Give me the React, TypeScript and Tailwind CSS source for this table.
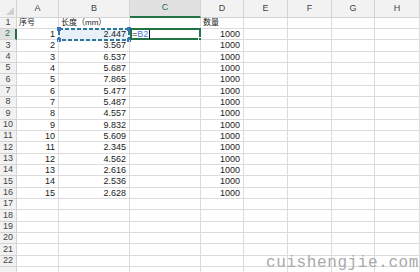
import React from "react";

const columns = [
  { key: "A", width: "w-[42px]" },
  { key: "B", width: "w-[71px]" },
  { key: "C", width: "w-[71px]" },
  { key: "D", width: "w-[43px]" },
  { key: "E", width: "w-[44px]" },
  { key: "F", width: "w-[44px]" },
  { key: "G", width: "w-[43px]" },
  { key: "H", width: "w-[45px]" },
];

const lengths = [
  "2.447", "3.567", "6.537", "5.687", "7.865", "5.477", "5.487", "4.557",
  "9.832", "5.609", "2.345", "4.562", "2.616", "2.536", "2.628",
];

const ROW_COUNT = 23;

const cellText = (row: number, col: string): React.ReactNode => {
  if (row === 1) {
    if (col === "A") return "序号";
    if (col === "B") return "长度（mm）";
    if (col === "D") return "数量";
    return null;
  }
  if (row >= 2 && row <= 16) {
    if (col === "A") return String(row - 1);
    if (col === "B") return lengths[row - 2];
    if (col === "D") return "1000";
  }
  return null;
};

const Corner = () => (
  <div className="w-[17px] h-full shrink-0 bg-[#f2f2f2] border-r border-b border-[#d4d4d4] flex items-end justify-end p-[2px]">
    <svg width="8" height="8" viewBox="0 0 8 8">
      <polygon points="8,0 8,8 0,8" fill="#cfcfcf" />
    </svg>
  </div>
);

const HeaderRow = () => (
  <div className="flex h-[18px] shrink-0">
    <Corner />
    {columns.map((c) => {
      const selected = c.key === "C";
      return (
        <div
          key={c.key}
          className={`${c.width} shrink-0 h-full border-r border-[#d4d4d4] flex items-center justify-center text-[9px] ${
            selected
              ? "bg-[#e1e1e1] border-b-2 border-b-[#217346] text-[#217346]"
              : "bg-[#f2f2f2] border-b text-[#444]"
          }`}
        >
          <span>{c.key}</span>
        </div>
      );
    })}
  </div>
);

// copy-range "marching ants" around B2
const CopyMarquee = () => (
  <div className="absolute top-[-1px] left-[-1px] w-[72px] h-[13px] bg-[#e8f0fa]">
    <svg className="absolute left-0 top-0" width="72" height="13" viewBox="0 0 72 13">
      <rect x="1" y="1" width="70" height="11" fill="none" stroke="#2f7896" strokeWidth="2" strokeDasharray="4 2" />
    </svg>
    <span className="absolute top-[-1px] left-[-1px] w-[4px] h-[4px] bg-[#3a6fc4]" />
    <span className="absolute top-[-1px] right-[-1px] w-[4px] h-[4px] bg-[#3a6fc4]" />
    <span className="absolute bottom-[-1px] left-[-1px] w-[4px] h-[4px] bg-[#3a6fc4]" />
    <span className="absolute bottom-[-1px] right-[-1px] w-[4px] h-[4px] bg-[#3a6fc4]" />
  </div>
);

const Cell = ({ row, col, width }: { row: number; col: string; width: string }) => {
  const value = cellText(row, col);
  const isText = row === 1;
  const isB2 = row === 2 && col === "B";
  const isC2 = row === 2 && col === "C";

  return (
    <div
      className={`${width} shrink-0 h-full relative border-r border-b border-[#dcdcdc] flex items-center ${
        isText ? "justify-start pl-[2px]" : "justify-end pr-[3px]"
      } text-[#222]`}
    >
      {isB2 && <CopyMarquee />}
      {isC2 && (
        <>
          <div className="absolute top-[-1px] left-[0px] right-[-1px] bottom-[-1px] border-2 border-[#217346]">
            <span className="absolute -bottom-[3px] -right-[3px] w-[4px] h-[4px] bg-[#217346] border border-white" />
          </div>
          <div className="relative flex items-center pl-[2px] w-full text-[9px] leading-none">
            <span className="text-[#222]">=</span>
            <span className="text-[#4a7bd0]">B2</span>
            <span className="w-px h-[9px] bg-[#111] ml-[1px]" />
          </div>
        </>
      )}
      {value !== null && (
        <span className={`relative ${isText ? "text-[8px]" : "text-[9px]"} leading-none`}>{value}</span>
      )}
    </div>
  );
};

const DataRow = ({ row }: { row: number }) => {
  const active = row === 2;
  const height = row % 3 === 0 ? "h-[12px]" : "h-[11px]";
  const label = row < ROW_COUNT ? row : null;
  return (
    <div className={`flex ${height} shrink-0`}>
      <div
        className={`w-[17px] shrink-0 h-full border-b border-[#d4d4d4] flex items-center justify-center text-[9px] ${
          active
            ? "bg-[#e1e1e1] border-r-2 border-r-[#217346] text-[#217346]"
            : "bg-[#f2f2f2] border-r text-[#444]"
        }`}
      >
        {label}
      </div>
      {columns.map((c) => (
        <Cell key={c.key} row={row} col={c.key} width={c.width} />
      ))}
    </div>
  );
};

export default function App() {
  return (
    <div className="relative w-[420px] h-[272px] overflow-hidden bg-white font-['Liberation_Sans','Noto_Sans_CJK_SC',sans-serif]">
      <div className="flex flex-col">
        <HeaderRow />
        {Array.from({ length: ROW_COUNT }, (_, i) => (
          <DataRow key={i} row={i + 1} />
        ))}
      </div>
      <div className="absolute left-[266px] top-[255px] text-[16px] leading-[16px] tracking-[0.6px] text-[#a9a9a9] font-['Liberation_Mono',monospace]">
        cuishengjie.com
      </div>
    </div>
  );
}
